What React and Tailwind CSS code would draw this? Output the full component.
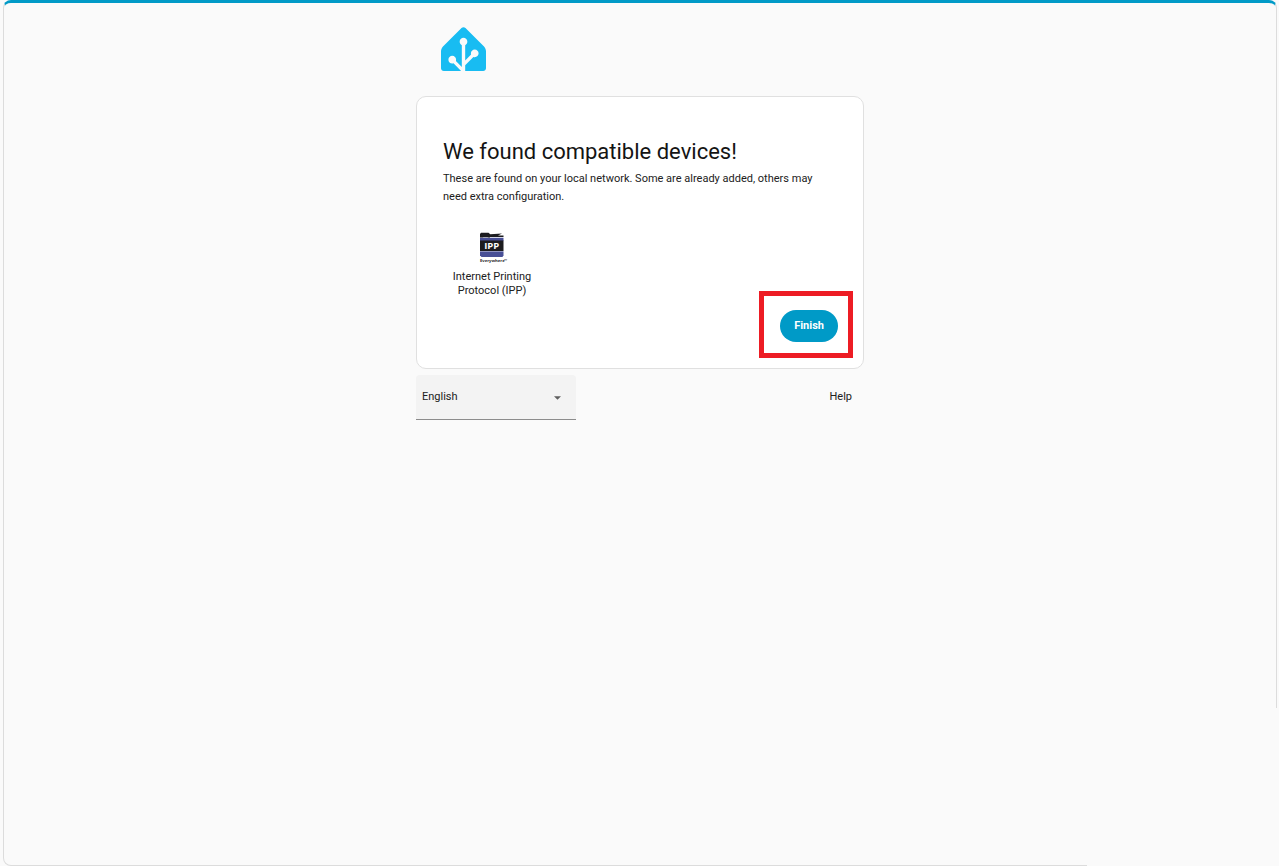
import { useState } from "react"

const languages = ["English", "Deutsch", "Español", "Français", "Nederlands"]

const devices = [{ id: "ipp", name: "Internet Printing Protocol (IPP)", Icon: IppIcon }]

function HomeLogo() {
  return (
    <svg viewBox="0 0 240 240" className="h-[45px] w-[45px]" role="img" aria-label="Home Assistant">
      <path
        fill="#18bcf2"
        d="M229.39 109.153L130.61 10.373C124.78 4.543 115.23 4.543 109.4 10.373L10.61 109.153C4.78 114.983 0 126.512 0 134.762V224.762C0 233.012 6.75 239.762 15 239.762H107.27L66.64 199.132C64.55 199.852 62.32 200.262 60 200.262C48.7 200.262 39.5 191.062 39.5 179.762C39.5 168.462 48.7 159.262 60 159.262C71.3 159.262 80.5 168.462 80.5 179.762C80.5 182.092 80.09 184.322 79.37 186.412L111 218.042V102.162C104.2 98.823 99.5 91.843 99.5 83.773C99.5 72.473 108.7 63.273 120 63.273C131.3 63.273 140.5 72.473 140.5 83.773C140.5 91.843 135.8 98.823 129 102.162V183.432L160.46 151.972C159.84 150.012 159.5 147.932 159.5 145.772C159.5 134.472 168.7 125.272 180 125.272C191.3 125.272 200.5 134.472 200.5 145.772C200.5 157.072 191.3 166.272 180 166.272C177.5 166.272 175.12 165.802 172.91 164.982L129 208.892V239.772H225C233.25 239.772 240 233.022 240 224.772V134.772C240 126.522 235.23 115.002 229.39 109.162Z"
      />
    </svg>
  )
}

function IppIcon() {
  return (
    <svg viewBox="0 0 32 32" className="h-8 w-8" aria-hidden="true">
      <path fill="#1c1c1f" d="M4 2 5 .8h7.500l1.800 1.400L26 1.400 22 3.500h5.500V5H4z" />
      <path fill="#d5d7e8" d="M4 5h23.500v1H4z" />
      <path fill="#1c1c1f" d="M4 4.800h3l1 1h3l1-1h2v.800H4z" />
      <path fill="#484f96" d="M4 6h23.500v3H4z" />
      <path fill="#1c1c1f" d="M4 8.500h23.500V19H4z" />
      <path fill="#b9bcdc" d="M4 19h23.500v.600H4z" />
      <path fill="#484f96" d="M4 19.600h23.500v3.600L26.500 25h-21L4 23.200z" />
      <text
        x="15.700"
        y="17.300"
        textAnchor="middle"
        fill="#ffffff"
        fontFamily="'Open Sans', sans-serif"
        fontSize="9.500"
        fontWeight="700"
      >
        IPP
      </text>
      <text x="4" y="30" fill="#1c1c1f" fontFamily="'Open Sans', sans-serif" fontSize="4.200" fontWeight="700">
        Everywhere
      </text>
      <text x="28" y="30" fill="#1c1c1f" fontFamily="'Open Sans', sans-serif" fontSize="4">
        ™
      </text>
    </svg>
  )
}

function LanguagePicker() {
  const [language, setLanguage] = useState("English")

  return (
    <div className="relative w-40">
      <select
        aria-label="Language"
        value={language}
        onChange={(e) => setLanguage(e.target.value)}
        className="h-[45px] w-full appearance-none rounded-t-sm border-b border-[#8c8c8c] bg-[#f3f3f3] px-1.5 text-[11px] text-[#212121]"
      >
        {languages.map((name) => (
          <option key={name}>{name}</option>
        ))}
      </select>
      <svg
        viewBox="0 0 8 4"
        className="pointer-events-none absolute top-[21px] right-[15px] h-[4px] w-[7px]"
        aria-hidden="true"
      >
        <path fill="#5f5f5f" d="M0 0h8L4 4z" />
      </svg>
    </div>
  )
}

export default function App() {
  return (
    <div className="flex min-h-screen bg-[#fafafa] pr-0.5 pl-[3px] font-['Roboto',sans-serif] text-[#212121]">
      <div className="relative flex-1 rounded-lg border border-t-3 border-[#dcdcdc] border-t-[#009ac7]">
        {/* Open corner of the window frame */}
        <div className="absolute -right-px -bottom-px h-[158px] w-[190px] bg-[#fafafa]" />

        <main className="mx-auto max-w-[448px] pt-[23px]">
          <header className="px-[25px]">
            <HomeLogo />
          </header>

          <section className="mt-[25px] rounded-[10px] border border-[#e0e0e0] bg-white pt-[41px] pr-[25px] pb-[26px] pl-[26px]">
            <h1 className="text-[22px] leading-7 text-[#141414]">We found compatible devices!</h1>
            <p className="mt-1 text-[11px] leading-[18px]">
              These are found on your local network. Some are already added, others may need extra
              configuration.
            </p>

            <ul className="mt-[26px] flex">
              {devices.map(({ id, name, Icon }) => (
                <li key={id} className="flex w-[98px] flex-col items-center text-center">
                  <Icon />
                  <span className="mt-1.5 text-[11px] leading-[14px]">{name}</span>
                </li>
              ))}
            </ul>

            <div className="mt-3 flex justify-end">
              <div className="relative">
                <button
                  type="button"
                  className="h-8 rounded-full bg-[#009ac7] px-3.5 text-[11px] font-bold text-white"
                >
                  Finish
                </button>
                <div className="pointer-events-none absolute -top-[19px] -right-[15px] -bottom-4 -left-[21px] border-5 border-[#ed1c24]" />
              </div>
            </div>
          </section>

          <footer className="mt-1.5 flex items-center justify-between">
            <LanguagePicker />
            <a href="#help" className="px-3 text-[11px]">
              Help
            </a>
          </footer>
        </main>
      </div>
    </div>
  )
}
